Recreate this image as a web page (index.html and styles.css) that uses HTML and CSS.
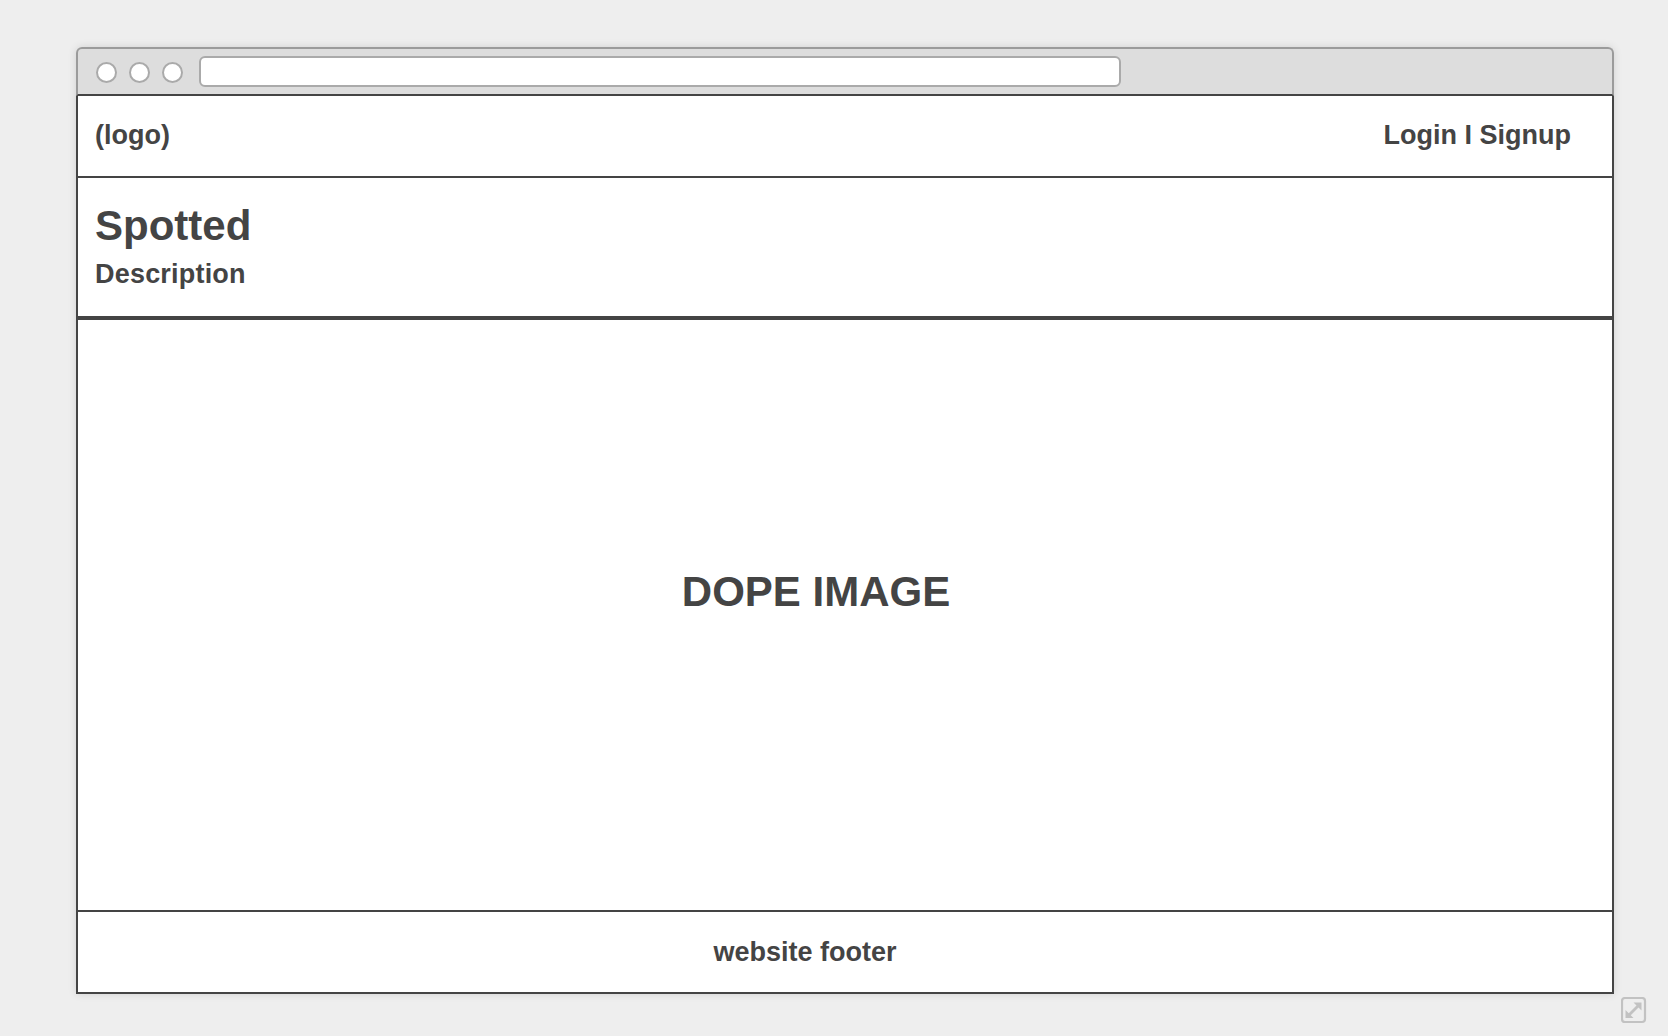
FILE: index.html
```html
<!DOCTYPE html>
<html>

<head>
    <title>Spotted - Wireframe</title>
    <link rel="stylesheet" href="styles.css">
</head>

<body>
    <div class="browser">
        <div class="titlebar">
            <span class="dot"></span>
            <span class="dot"></span>
            <span class="dot"></span>
            <div class="address"></div>
        </div>

        <div class="page">
            <div class="header">
                <span class="logo">(logo)</span>
                <span class="auth">Login I Signup</span>
            </div>

            <div class="hero">
                <h1>Spotted</h1>
                <h2>Description</h2>
            </div>

            <div class="image">
                <span>DOPE IMAGE</span>
            </div>

            <div class="footer">
                <span>website footer</span>
            </div>
        </div>
    </div>

    <div class="resize">
        <svg width="26" height="27" viewBox="0 0 26 27">
            <rect x="1" y="1" width="23" height="24" rx="3" fill="none" stroke="#c2c2c2" stroke-width="2.2" />
            <path d="M8 18 L17.5 8.5" stroke="#c2c2c2" stroke-width="2.8" />
            <path d="M20.5 5.5 L20.5 13.5 L12.5 5.5 Z" fill="#c2c2c2" />
            <path d="M4.5 21 L4.5 13 L12.5 21 Z" fill="#c2c2c2" />
        </svg>
    </div>
</body>

</html>
```

FILE: styles.css
```css
body {
    margin: 0;
    background-color: #eeeeee;
    font-family: "Liberation Sans", Arial, sans-serif;
    font-weight: bold;
    color: #444444;
}

.browser {
    width: 1538px;
    margin: 47px 0 0 76px;
    box-shadow: 0 0 8px rgba(0, 0, 0, 0.12);
    border-radius: 6px 6px 0 0;
}

.titlebar {
    display: flex;
    align-items: center;
    gap: 12px;
    height: 45px;
    padding-left: 18px;
    background-color: #dddddd;
    border: 2px solid #9b9b9b;
    border-bottom: 2px solid #444444;
    border-radius: 6px 6px 0 0;
}

.dot {
    width: 17px;
    height: 17px;
    margin-top: 2px;
    border: 2px solid #aaaaaa;
    border-radius: 50%;
    background-color: #ffffff;
}

.address {
    width: 918px;
    height: 27px;
    margin-left: 4px;
    background-color: #ffffff;
    border: 2px solid #aaaaaa;
    border-radius: 6px;
}

.page {
    background-color: #ffffff;
    border: 2px solid #444444;
    border-top: none;
}

.header {
    display: flex;
    justify-content: space-between;
    align-items: center;
    height: 78px;
    padding: 0 41px 2px 17px;
    border-bottom: 2px solid #444444;
    font-size: 27px;
}

.hero {
    height: 111px;
    padding: 27px 17px 0;
    border-bottom: 4px solid #444444;
}

.hero h1 {
    margin: 0;
    font-size: 42px;
    line-height: 1;
}

.hero h2 {
    margin: 14px 0 0;
    font-size: 27px;
    line-height: 1;
    letter-spacing: 0.2px;
}

.image {
    display: flex;
    justify-content: center;
    align-items: center;
    height: 544px;
    padding: 0 58px 46px 0;
    border-bottom: 2px solid #444444;
    font-size: 42px;
}

.footer {
    display: flex;
    justify-content: center;
    align-items: center;
    height: 80px;
    padding-right: 80px;
    font-size: 27px;
}

.resize {
    display: flex;
    justify-content: flex-end;
    width: 1571px;
    margin: 3px 0 0 76px;
}

.resize svg {
    display: block;
}
```
